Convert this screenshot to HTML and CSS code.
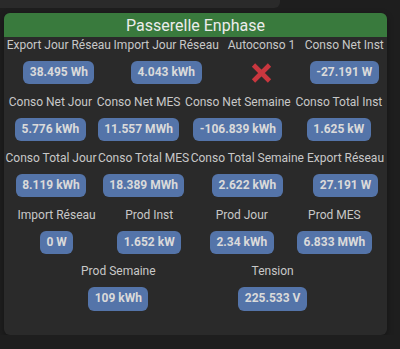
FILE: index.html
```html
<!DOCTYPE html>
<html lang="fr">
<head>
<meta charset="utf-8">
<title>Passerelle Enphase</title>
<link rel="stylesheet" href="styles.css">
</head>
<body>
<div class="prev-card"></div>
<div class="card">
  <div class="header">Passerelle Enphase</div>
  <div class="cmds">
    <div class="row">
      <div class="cmd"><div class="label">Export Jour Réseau</div><div class="badge">38.495 Wh</div></div>
      <div class="cmd"><div class="label">Import Jour Réseau</div><div class="badge">4.043 kWh</div></div>
      <div class="cmd"><div class="label">Autoconso 1</div><div class="icon"><svg width="21" height="20" viewBox="0 0 21 20"><path d="M2.5 2 L18.5 18 M18.5 2 L2.5 18" stroke="#c9373f" stroke-width="4.6" fill="none"/></svg></div></div>
      <div class="cmd"><div class="label">Conso Net Inst</div><div class="badge">-27.191 W</div></div>
    </div>
    <div class="row">
      <div class="cmd"><div class="label">Conso Net Jour</div><div class="badge">5.776 kWh</div></div>
      <div class="cmd"><div class="label">Conso Net MES</div><div class="badge">11.557 MWh</div></div>
      <div class="cmd"><div class="label">Conso Net Semaine</div><div class="badge">-106.839 kWh</div></div>
      <div class="cmd"><div class="label">Conso Total Inst</div><div class="badge">1.625 kW</div></div>
    </div>
    <div class="row">
      <div class="cmd"><div class="label">Conso Total Jour</div><div class="badge">8.119 kWh</div></div>
      <div class="cmd"><div class="label">Conso Total MES</div><div class="badge">18.389 MWh</div></div>
      <div class="cmd"><div class="label">Conso Total Semaine</div><div class="badge">2.622 kWh</div></div>
      <div class="cmd"><div class="label">Export Réseau</div><div class="badge">27.191 W</div></div>
    </div>
    <div class="row">
      <div class="cmd"><div class="label">Import Réseau</div><div class="badge">0 W</div></div>
      <div class="cmd"><div class="label">Prod Inst</div><div class="badge">1.652 kW</div></div>
      <div class="cmd"><div class="label">Prod Jour</div><div class="badge">2.34 kWh</div></div>
      <div class="cmd"><div class="label">Prod MES</div><div class="badge">6.833 MWh</div></div>
    </div>
    <div class="row">
      <div class="cmd"><div class="label">Prod Semaine</div><div class="badge">109 kWh</div></div>
      <div class="cmd"><div class="label">Tension</div><div class="badge">225.533 V</div></div>
    </div>
  </div>
</div>
</body>
</html>
```
FILE: styles.css
```css
html, body {
  margin: 0;
  padding: 0;
  background: #1e1e1e;
  font-family: Roboto, "Liberation Sans", sans-serif;
}
.prev-card {
  width: 280px;
  height: 8px;
  background: #2a2a2a;
  border-bottom-right-radius: 6px;
}
.card {
  margin: 5px 0 0 4px;
  width: 383px;
  background: #2a2a2a;
  border-radius: 6px;
  padding-bottom: 15px;
  box-shadow: 0 2px 6px rgba(0, 0, 0, 0.35);
}
.header {
  height: 24px;
  line-height: 25px;
  background: #397a3d;
  border-radius: 6px 6px 0 0;
  color: #ececec;
  font-size: 16px;
  text-align: center;
}
.row {
  display: flex;
  justify-content: space-evenly;
}
.cmd {
  min-width: 80px;
  display: flex;
  flex-direction: column;
  align-items: center;
  margin-bottom: 9.3px;
}
.label {
  font-size: 12px;
  line-height: 16px;
  color: #c8c8c8;
  white-space: nowrap;
  margin-bottom: 8px;
}
.badge {
  height: 23.3px;
  line-height: 23.3px;
  padding: 0 6.5px;
  background: #5474a9;
  border-radius: 6px;
  color: #dadada;
  font-size: 12px;
  font-weight: bold;
  white-space: nowrap;
}
.icon {
  height: 23.3px;
  display: flex;
  align-items: center;
}
.icon svg {
  display: block;
}
```
